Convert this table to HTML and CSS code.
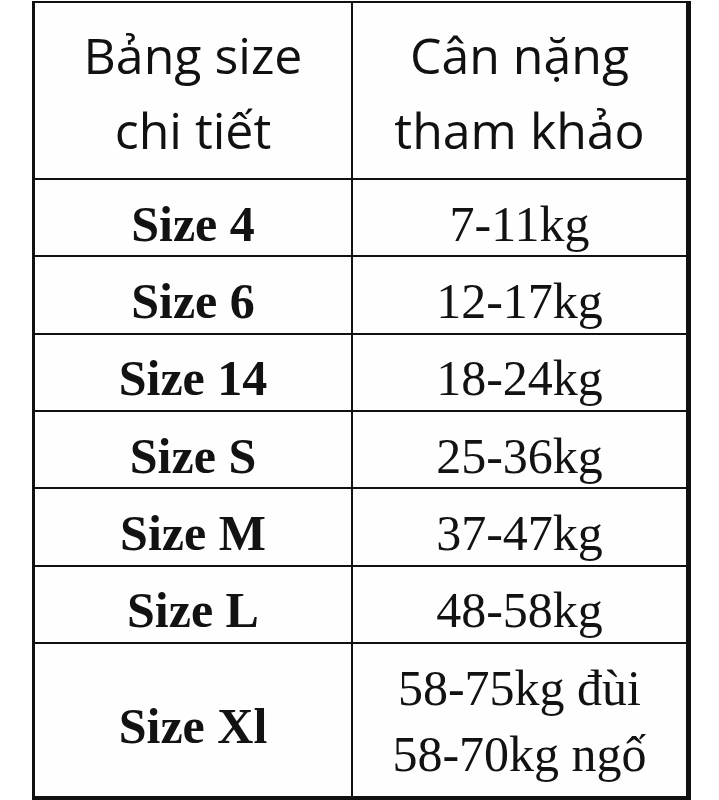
FILE: index.html
```html
<!DOCTYPE html>
<html lang="vi">
<head>
<meta charset="utf-8">
<title>Bảng size</title>
<link rel="stylesheet" href="styles.css">
</head>
<body>
<div class="size-table">
  <div class="cell head">Bảng size<br>chi tiết</div>
  <div class="cell head">Cân nặng<br>tham khảo</div>

  <div class="cell size">Size 4</div>
  <div class="cell weight">7-11kg</div>

  <div class="cell size">Size 6</div>
  <div class="cell weight">12-17kg</div>

  <div class="cell size">Size 14</div>
  <div class="cell weight">18-24kg</div>

  <div class="cell size">Size S</div>
  <div class="cell weight">25-36kg</div>

  <div class="cell size">Size M</div>
  <div class="cell weight">37-47kg</div>

  <div class="cell size">Size L</div>
  <div class="cell weight">48-58kg</div>

  <div class="cell size">Size Xl</div>
  <div class="cell weight multi">58-75kg đùi<br>58-70kg ngố</div>
</div>
</body>
</html>
```

FILE: styles.css
```css
html, body {
  margin: 0;
  padding: 0;
  background: #ffffff;
}

body {
  padding: 1px 0 0 32px;
}

.size-table {
  width: 659px;
  box-sizing: border-box;
  display: grid;
  grid-template-columns: 316px 333px;
  grid-template-rows: 175px repeat(6, 75.33px) 152px;
  gap: 2px;
  padding: 2px 5px 4px 3px;
  background: #111111;
}

.cell {
  background: #fefefe;
  display: flex;
  align-items: center;
  justify-content: center;
  text-align: center;
  color: #121212;
  box-sizing: border-box;
}

.head {
  font-family: "Open Sans", "Noto Sans", sans-serif;
  font-size: 50px;
  line-height: 75px;
  padding-top: 5px;
  color: #111111;
}

.size {
  font-family: "Liberation Serif", "Times New Roman", serif;
  font-weight: bold;
  font-size: 50px;
  padding-top: 12px;
}

.weight {
  font-family: "Liberation Serif", "Times New Roman", serif;
  font-size: 50px;
  padding-top: 12px;
}

.weight.multi {
  line-height: 66px;
  padding-top: 2px;
}
```
